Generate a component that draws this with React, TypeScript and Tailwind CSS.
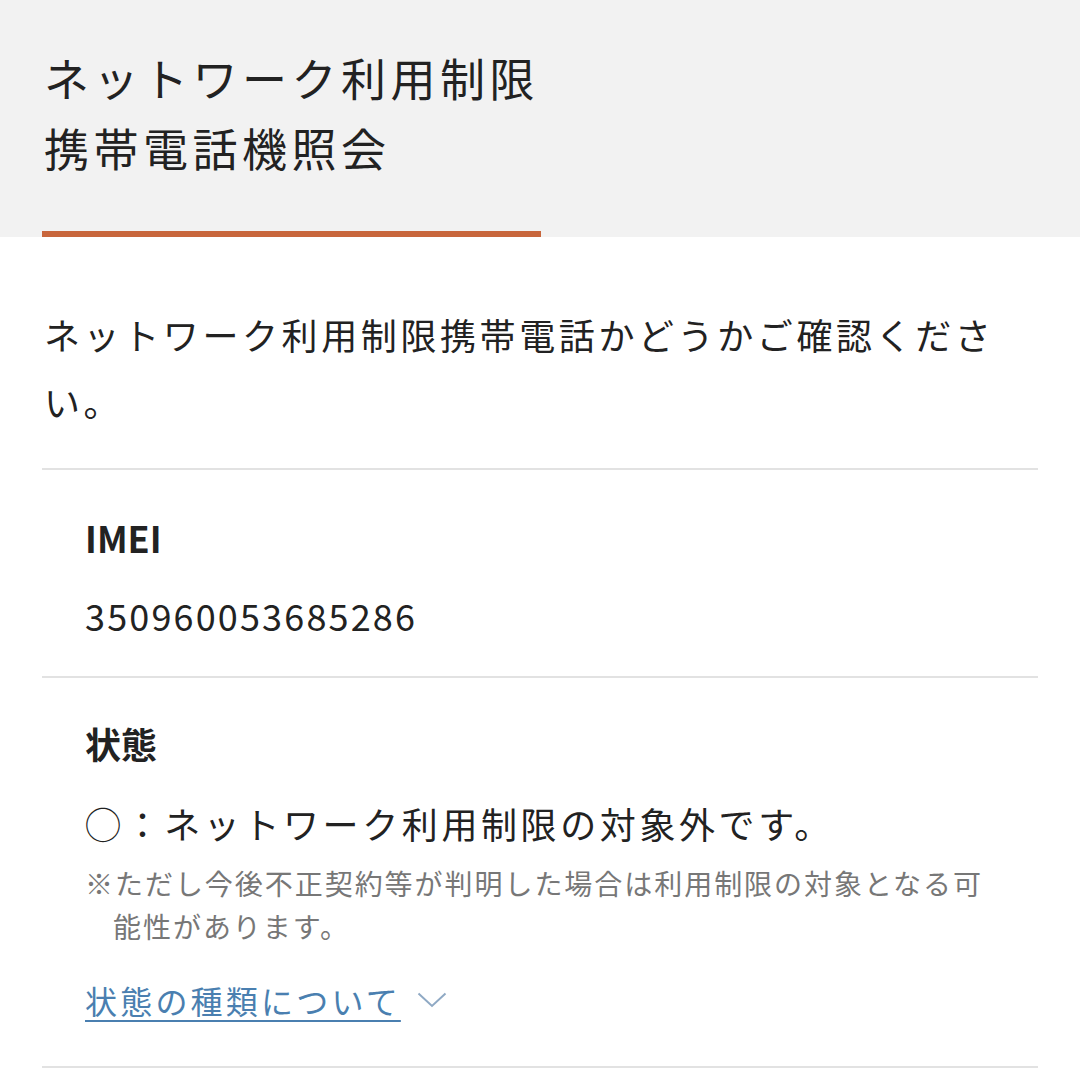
const jp = "font-['Noto_Sans_CJK_JP','Noto_Sans',sans-serif]";

function Chevron() {
  return (
    <svg width="30" height="16" viewBox="0 0 30 16" fill="none" className="ml-[16px]">
      <path d="M1.5 1.5 L15 14 L28.5 1.5" stroke="#8fa9c4" strokeWidth="2" />
    </svg>
  );
}

export default function App() {
  return (
    <div className={`${jp} w-[1080px] h-[1080px] overflow-hidden bg-white text-[#222]`}>
      <header className="bg-[#f2f2f2] pt-[43px] px-[42px]">
        <h1 className="pl-[2px] text-[45px] leading-[70px] tracking-[0.1em] font-normal">
          ネットワーク利用制限
          <br />
          携帯電話機照会
        </h1>
        <div className="mt-[48px] h-[6px] w-[499px] bg-[#c8663c]" />
      </header>

      <main className="px-[42px]">
        <p className="pl-[2px] pt-[64px] pb-[33px] text-[36px] leading-[67px] tracking-[0.1em] border-b-2 border-[#e2e2e2]">
          ネットワーク利用制限携帯電話かどうかご確認ください。
        </p>

        <section className="px-[43px] pt-[41px] pb-[35px] border-b-2 border-[#e2e2e2]">
          <h2 className="text-[36px] leading-[52px] font-bold">IMEI</h2>
          <p className="mt-[26px] text-[36px] leading-[52px] tracking-[0.06em]">350960053685286</p>
        </section>

        <section className="pl-[43px] pr-[40px] pt-[39px] pb-[42px] border-b-2 border-[#e2e2e2]">
          <h2 className="text-[36px] leading-[52px] font-bold">状態</h2>
          <p className="mt-[28px] text-[36px] leading-[52px] tracking-[0.1em]">
            ◯：ネットワーク利用制限の対象外です。
          </p>
          <p className="mt-[13px] pl-[1em] -indent-[1em] text-[28px] leading-[43px] tracking-[0.07em] text-[#777]">
            ※ただし今後不正契約等が判明した場合は利用制限の対象となる可能性があります。
          </p>
          <div className="mt-[28px] flex items-center">
            <a className="text-[32px] leading-[48px] tracking-[0.1em] text-[#4a7fb0] underline decoration-2 underline-offset-[6px]">
              状態の種類について
            </a>
            <Chevron />
          </div>
        </section>
      </main>
    </div>
  );
}
